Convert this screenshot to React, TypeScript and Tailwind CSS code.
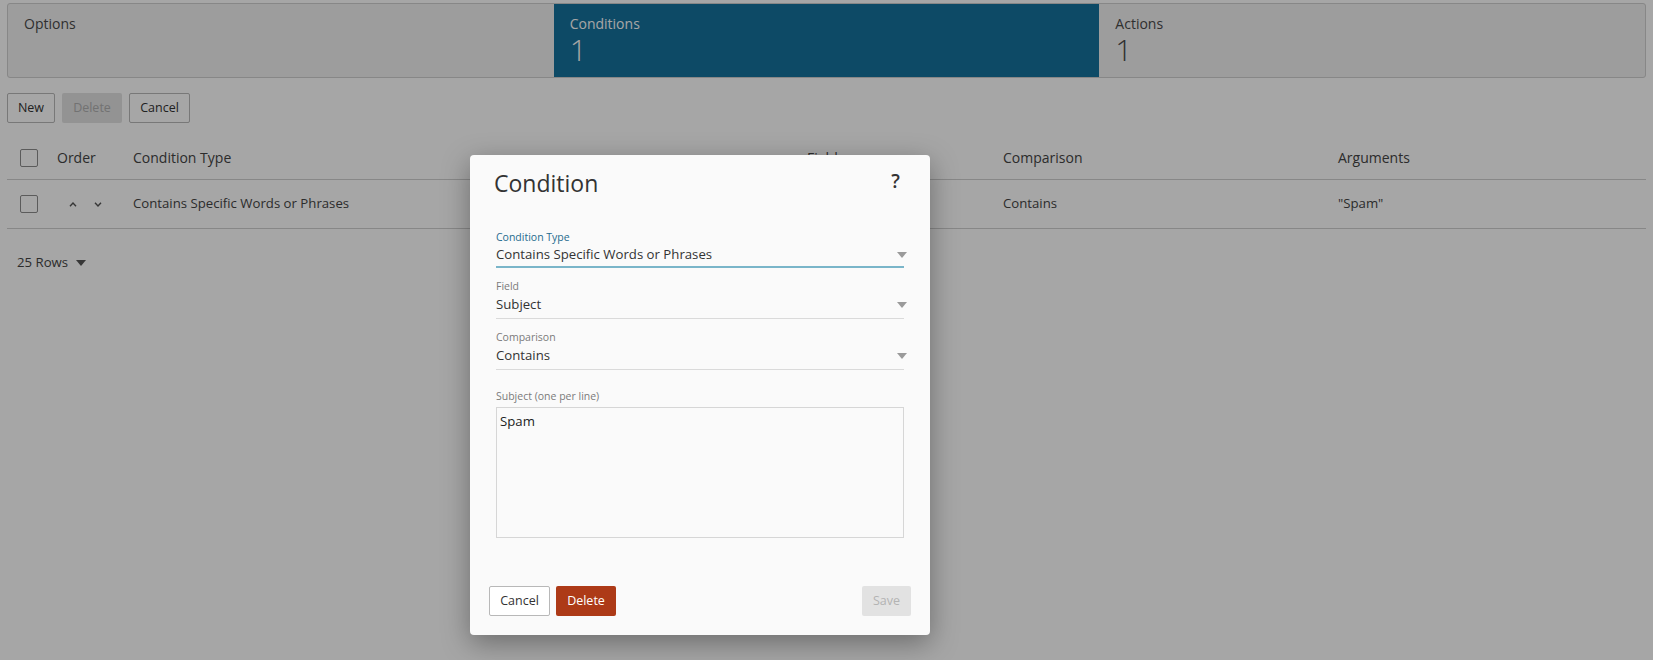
import React from "react";

const font = { fontFamily: '"Open Sans", "Noto Sans", sans-serif' };

function Checkbox() {
  return <div className="w-[18px] h-[18px] border-[1.5px] border-[#8c8c8c] rounded-[2px] bg-white" />;
}

function Caret({ className = "" }: { className?: string }) {
  return (
    <svg width="10" height="6" viewBox="0 0 10 6" className={className}>
      <path d="M0 0 L10 0 L5 6 Z" fill="currentColor" />
    </svg>
  );
}

function Select({ label, value, active = false }: { label: string; value: string; active?: boolean }) {
  return (
    <div className="flex flex-col">
      <div className={`text-[10.5px] leading-[14px] ${active ? "text-[#1f6b8e]" : "text-[#7a7a7a]"}`}>{label}</div>
      <div
        className={`flex items-start justify-between ${
          active ? "h-[24px] border-b-2 border-[#7ab5c9]" : "h-[26px] pt-[1px] border-b border-[#dadada]"
        }`}
      >
        <span className="text-[13.2px] text-[#333333] leading-[20px]">{value}</span>
        <Caret className="text-[#9a9a9a] mr-[-3px] mt-[8px]" />
      </div>
    </div>
  );
}

export default function App() {
  return (
    <div className="relative w-[1653px] h-[660px] overflow-hidden bg-white text-[#333333]" style={font}>
      {/* Tabs */}
      <div className="mx-[7px] mt-[3px] h-[75px] flex border border-[#cfcfcf] rounded-[3px] bg-[#f1f1f1] overflow-hidden">
        <div className="flex-1 px-[16px] pt-[11px] text-[#4a4a4a]">
          <div className="text-[14px] leading-[18px]">Options</div>
        </div>
        <div className="flex-1 px-[16px] pt-[11px] bg-[#14729d] text-white">
          <div className="text-[14px] leading-[18px]">Conditions</div>
          <div className="text-[30px] leading-[34px] font-light">1</div>
        </div>
        <div className="flex-1 px-[16px] pt-[11px] text-[#4a4a4a]">
          <div className="text-[14px] leading-[18px]">Actions</div>
          <div className="text-[30px] leading-[34px] font-light">1</div>
        </div>
      </div>

      {/* Toolbar */}
      <div className="flex gap-[7px] mx-[7px] mt-[15px]">
        <button className="h-[30px] w-[48px] border border-[#b8b8b8] rounded-[2px] bg-white text-[12.5px] text-[#333]">New</button>
        <button className="h-[30px] w-[60px] rounded-[2px] bg-[#e2e2e2] text-[12.5px] text-[#b0b0b0]">Delete</button>
        <button className="h-[30px] w-[61px] border border-[#b8b8b8] rounded-[2px] bg-white text-[12.5px] text-[#333]">Cancel</button>
      </div>

      {/* Table */}
      <div className="mx-[7px] mt-[13px]">
        <div className="grid grid-cols-[37px_76px_674px_196px_335px_1fr] items-center h-[44px] pl-[13px] border-b border-[#d0d0d0] text-[14px] text-[#444]">
          <Checkbox />
          <div>Order</div>
          <div>Condition Type</div>
          <div>Field</div>
          <div>Comparison</div>
          <div>Arguments</div>
        </div>
        <div className="grid grid-cols-[37px_76px_674px_196px_335px_1fr] items-center h-[49px] pl-[13px] border-b border-[#d0d0d0] text-[13.2px] text-[#444]">
          <Checkbox />
          <div className="flex items-center gap-[17px] pl-[12px] text-[#555]">
            <svg width="8" height="5" viewBox="0 0 8 5">
              <polyline points="1,4.2 4,1 7,4.2" fill="none" stroke="currentColor" strokeWidth="1.4" />
            </svg>
            <svg width="8" height="5" viewBox="0 0 8 5">
              <polyline points="1,0.8 4,4 7,0.8" fill="none" stroke="currentColor" strokeWidth="1.4" />
            </svg>
          </div>
          <div>Contains Specific Words or Phrases</div>
          <div>Subject</div>
          <div>Contains</div>
          <div>"Spam"</div>
        </div>
        <div className="flex items-center gap-[8px] pl-[10px] mt-[24px] text-[13.2px] text-[#444]">
          <span>25 Rows</span>
          <Caret className="text-[#555]" />
        </div>
      </div>

      {/* Overlay */}
      <div className="absolute inset-0 bg-black/35" />

      {/* Modal */}
      <div className="absolute left-[470px] top-[155px] w-[460px] h-[480px] bg-[#fafafa] rounded-[4px] shadow-[0_8px_28px_rgba(0,0,0,0.35)] flex flex-col">
        <div className="flex items-center justify-between pl-[24px] pr-[30px] pt-[14px]">
          <div className="text-[23px] text-[#333] leading-[28px]">Condition</div>
          <div className="text-[19px] font-semibold text-[#333] leading-[24px] mt-[-4px]">?</div>
        </div>
        <div className="flex flex-col px-[26px] pt-[33px]">
          <Select label="Condition Type" value="Contains Specific Words or Phrases" active />
          <div className="mt-[11px]">
            <Select label="Field" value="Subject" />
          </div>
          <div className="mt-[11px]">
            <Select label="Comparison" value="Contains" />
          </div>
          <div className="mt-[19px] text-[10.5px] leading-[14px] text-[#7a7a7a]">Subject (one per line)</div>
          <div className="mt-[4px] h-[131px] border border-[#d6d6d6] bg-[#fafafa] px-[3px] pt-[3px] text-[13.2px] text-[#222] leading-[20px]">
            Spam
          </div>
        </div>
        <div className="mt-auto flex items-center justify-between px-[19px] pb-[19px]">
          <div className="flex gap-[6px]">
            <button className="h-[30px] w-[61px] border border-[#b8b8b8] rounded-[2px] bg-white text-[12.5px] text-[#333]">Cancel</button>
            <button className="h-[30px] w-[60px] rounded-[2px] bg-[#ad3a17] text-[12.5px] text-white">Delete</button>
          </div>
          <button className="h-[30px] w-[49px] rounded-[2px] bg-[#e2e2e2] text-[12.5px] text-[#b3b3b3]">Save</button>
        </div>
      </div>
    </div>
  );
}
